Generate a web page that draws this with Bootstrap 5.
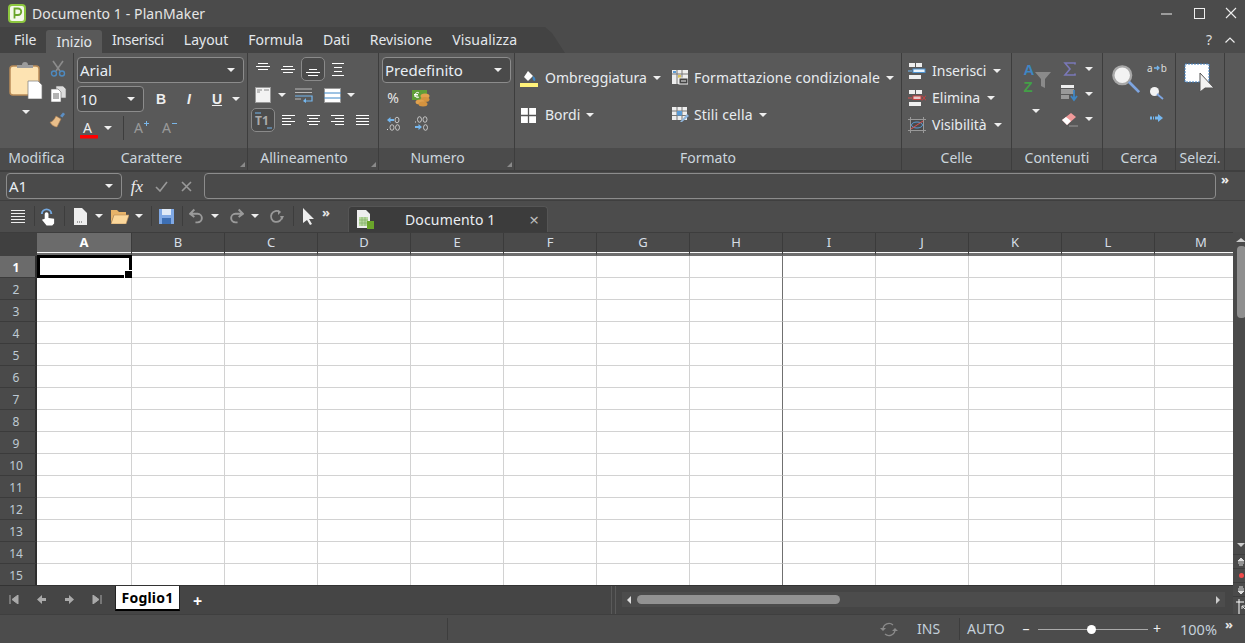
<!DOCTYPE html>
<html lang="it">
<head>
  <meta charset="UTF-8">
  <title>Documento 1 - PlanMaker</title>
  <link href="https://cdn.jsdelivr.net/npm/bootstrap@5.3.0/dist/css/bootstrap.min.css" rel="stylesheet">
  <style>
    html, body { height: 100%; overflow: hidden; }
    body { background: #4c4c4c; color: #e6e6e6; font-family: "Noto Sans", sans-serif; font-size: 14px; line-height: 1; }
    svg { display: block; flex: none; }
    text { font-family: "Noto Sans", sans-serif; }
    .tri { width: 0; height: 0; border-left: 4px solid transparent; border-right: 4px solid transparent; border-top: 4px solid #eee; flex: none; }

    .titlebar { height: 27px; background: #4b4b4b; }
    .app-logo { margin: 0 5px 0 8px; }
    .title-txt { letter-spacing: .1px; }
    .win-btns { gap: 14px; padding-right: 5px; }
    .tabrow { height: 26px; background: #4b4b4b; position: relative; }
    .tabstrip { width: 565px; height: 26px; background: #434343; clip-path: polygon(0 0, 545px 0, 552px 6px, 565px 26px, 0 26px); padding-left: 4px; }
    .rtab { padding: 0 10px; height: 26px; display: flex; align-items: center; color: #e4e8ec; }
    .rtab.on { background: #595959; border-radius: 3px 3px 0 0; margin-top: 3px; height: 23px; }
    .rtab.tight { letter-spacing: -.3px; }
    .rtab.wide { letter-spacing: .15px; }
    .tabright { gap: 12px; padding-right: 9px; color: #ddd; }

    .ribbon { height: 119px; background: #595959; border-bottom: 2px solid #3f3f3f; }
    .rgrp { display: flex; flex-direction: column; border-right: 1px solid #3d3d3d; flex: none; position: relative; }
    .rbody { height: 95px; padding-top: 4px; }
    .rlabel { height: 22px; background: #4b4b4b; color: #ccd6de; display: flex; align-items: center; justify-content: center; padding-bottom: 2px; }
    .rlabel.lnch { padding-right: 18px; }
    .launch { position: absolute; right: 2px; bottom: 3px; width: 0; height: 0; border-left: 5px solid transparent; border-bottom: 5px solid #8a8a8a; }
    .g-mod { width: 74px; } .g-car { width: 174px; } .g-ali { width: 131px; } .g-num { width: 136px; }
    .g-for { width: 387px; } .g-cel { width: 110px; } .g-con { width: 91px; } .g-cer { width: 73px; } .g-sel { width: 49px; }
    .g-rest { flex: 1; }

    .slots { display: grid; justify-items: center; align-items: center; }
    .combo { border: 1px solid #8c8c8c; border-radius: 4px; background: #4a4a4a; height: 26px; display: flex; align-items: center; justify-content: space-between; padding: 0 8px 0 2px; font-size: 15px; color: #e8eef4; }
    .press { border: 1px solid #8a8a8a; border-radius: 5px; background: #4b4b4b; width: 24px; height: 24px; display: flex; align-items: center; justify-content: center; }

    .mod-wrap { display: flex; padding-left: 8px; padding-top: 7px; }
    .mod-left { width: 36px; display: flex; flex-direction: column; align-items: center; gap: 11px; }
    .mod-right { width: 24px; margin-left: 2px; display: flex; flex-direction: column; align-items: center; gap: 8px; }

    .car-wrap { padding-left: 3px; }
    .c-font { width: 167px; }
    .c-size { width: 67px; }
    .car-r2 { margin-top: 3px; display: flex; align-items: center; }
    .car-bt { display: grid; grid-template-columns: 28px 28px 28px 10px; justify-items: center; align-items: center; margin-left: 3px; }
    .car-bt b, .car-bt i, .car-bt u { font-family: "Liberation Sans", sans-serif; font-size: 14px; font-weight: 700; color: #eee; }
    .car-r3 { grid-template-columns: 24px 14px 16px 22px 34px; margin-top: 3px; height: 26px; }
    .vsep { width: 1px; height: 24px; background: #3d3d3d; }
    .growa { display: flex; align-items: flex-start; color: #999; font-size: 14px; line-height: 16px; }

    .ali-wrap { padding-left: 2px; }
    .ali-r1 { grid-template-columns: repeat(4, 25px); height: 24px; }
    .ali-r2 { grid-template-columns: 26px 12px 32px 24px 14px; height: 24px; margin-top: 2px; }
    .ali-r3 { grid-template-columns: 26px 25px 24px 25px 24px; height: 24px; margin-top: 1px; }

    .num-wrap { padding-left: 3px; }
    .c-num { width: 129px; }
    .num-r { grid-template-columns: 22px 34px; margin-top: 3px; height: 24px; }
    .num-r + .num-r { margin-top: 1px; }

    .for-wrap { display: grid; grid-template-columns: 157px 228px; padding-top: 7px; row-gap: 1px; align-content: start; }
    .for-item { display: flex; align-items: center; height: 36px; color: #e8ecf0; }
    .for-ic { width: 30px; padding-left: 5px; flex: none; }
    .for-ic.brd { padding-left: 6px; }
    .for-ic2 { width: 22px; flex: none; }
    .for-item .tri { margin-left: 6px; }
    .for-wide { letter-spacing: .16px; }

    .cel-wrap { padding: 7px 0 0 6px; display: flex; flex-direction: column; gap: 6px; }
    .cel-item { display: flex; align-items: center; height: 21px; color: #e8ecf0; }
    .cel-item span { margin-left: 6px; margin-right: 7px; }

    .con-wrap { display: flex; padding-top: 3px; }
    .con-left { width: 48px; display: flex; flex-direction: column; align-items: center; gap: 14px; padding-top: 5px; }
    .az { display: flex; padding-left: 3px; }
    .azl { font-family: "Liberation Sans", sans-serif; font-weight: 700; font-size: 15px; line-height: 17px; height: 17px; }
    .azl.a1 { color: #3e86c4; }
    .azl.z1 { color: #43a047; }
    .az-funnel { margin-top: 11px; margin-left: 1px; }
    .con-right { display: grid; grid-template-columns: 20px 18px; justify-items: center; align-items: center; grid-auto-rows: 25px; }

    .cer-wrap { display: flex; padding: 6px 0 0 8px; }
    .mag-big { margin-top: 5px; }
    .cer-right { margin-left: 6px; display: flex; flex-direction: column; align-items: center; padding-top: 3px; }
    .cer-right .ab { font-size: 10px; line-height: 12px; height: 12px; display: flex; align-items: center; gap: 1px; color: #ddd; }
    .mag-sm { margin-top: 12px; }
    .arr-sm { margin-top: 13px; }

    .sel-wrap { padding: 10px 0 0 8px; }

    .formbar { height: 28px; padding-left: 6px; }
    .c-name { width: 116px; height: 26px; }
    .fxbtns { display: grid; grid-template-columns: 30px 18px 32px; justify-items: center; align-items: center; margin-right: 2px; }
    .fx { font-family: "Liberation Serif", serif; font-style: italic; font-size: 17px; color: #eee; }
    .finput { flex: 1; height: 26px; border: 1px solid #8c8c8c; border-radius: 4px; background: #4a4a4a; }
    .more { color: #eee; font-size: 13px; width: 18px; text-align: center; height: 26px; margin-right: 11px; font-weight: 700; }

    .toolbar { height: 32px; border-top: 1px solid #3f3f3f; padding-left: 8px; }
    .tb-slots { display: grid; height: 30px; justify-items: center; align-items: center;
      grid-template-columns: 20px 12px 16px 16px 16px 22px 20px 18px 6px 24px 8px 20px 18px 24px 14px 30px 2px 28px 8px; }
    .tsep { width: 1px; height: 20px; background: #3d3d3d; flex: none; }
    .tb-more { font-weight: 700; font-size: 13px; margin-top: -8px; }
    .doctab { width: 200px; height: 26px; margin: 5px 0 0 18px; background: #3c3c3c; border: 1px solid #555; border-bottom: 0; border-radius: 4px 4px 0 0; display: flex; align-items: center; padding: 0 8px 0 7px; color: #eaeef2; }
    .doctab span { margin-left: 31px; flex: 1; letter-spacing: .15px; }
    .doctab em { font-style: normal; color: #bbb; font-size: 17px; }

    .workarea { height: 382px; display: flex; }
    .workleft { width: 1233px; flex: none; }
    .sheet { height: 353px; display: grid; grid-template-columns: 37px 95px repeat(12, 93px); grid-template-rows: 23px 22px repeat(14, 22px); overflow: hidden; position: relative; border-top: 1px solid #3d3d3d; background: #4a4a4a; }
    .ch { background: #4a4a4a; border-right: 1px solid #3b3b3b; border-bottom: 3px solid #6e6e6e; box-shadow: inset 0 -1px 0 #f8f8f8; display: flex; align-items: center; justify-content: center; color: #d6dee6; font-size: 13px; padding-bottom: 2px; }
    .ch.corner { background: #404040; border-bottom: 0; border-right: 0; box-shadow: none; }
    .ch.on { background: #6b6b6b; color: #fff; font-weight: 700; }
    .rh { background: #4a4a4a; border-bottom: 1px solid #3b3b3b; border-right: 2px solid #2e2e2e; display: flex; align-items: center; justify-content: center; color: #bfcad4; font-size: 12px; padding: 2px 3px 0 0; }
    .rh.on { background: #6b6b6b; color: #fff; font-weight: 700; }
    .cl { background: #fff; border-right: 1px solid #d2d2d2; border-bottom: 1px solid #d2d2d2; }
    .cl.brk { border-right-color: #707070; }
    .selbox { position: absolute; left: 37px; top: 22px; width: 95px; height: 23px; border: 3px solid #000; }
    .selbox::after { content: ""; position: absolute; right: -3px; bottom: -3px; width: 8px; height: 8px; background: #000; border-left: 1px solid #fff; border-top: 1px solid #fff; }

    .vscroll { flex: 1; display: flex; flex-direction: column; align-items: center; background: #4a4a4a; padding-top: 6px; }
    .vthumb { width: 9px; height: 72px; background: #8f8f8f; border-radius: 4px; margin-top: 4px; }
    .vspace { flex: 1; }
    .tri-w { border-top-color: #ccc; margin-bottom: 7px; }
    .tri-up { width: 0; height: 0; border-left: 5px solid transparent; border-right: 5px solid transparent; border-bottom: 4px solid #ccc; }
    .vbtn { height: 14px; width: 100%; display: flex; align-items: center; justify-content: center; border-top: 1px solid #3d3d3d; }
    .vbtn.last { border-bottom: 1px solid #3d3d3d; height: 15px; }
    .dot { width: 5px; height: 5px; border-radius: 50%; background: #f04b4b; }
    .sizer { margin: 2px 0 0 3px; }

    .sheetbar { height: 29px; background: #454545; border-top: 1px solid #333; }
    .navs { display: grid; grid-template-columns: 28px 27px 28px 28px; justify-items: center; width: 115px; padding-top: 9px; }
    .stab { width: 65px; height: 25px; background: #fff; color: #000; font-weight: 700; border-bottom: 2px solid #000; border-left: 1px solid #222; border-right: 1px solid #222; display: flex; align-items: center; justify-content: center; font-size: 14px; letter-spacing: .2px; }
    .plus { margin: 7px 0 0 13px; color: #fff; font-weight: 700; font-size: 16px; }
    .splitter { margin: 0 6px 0 auto; width: 5px; height: 28px; border-left: 1px solid #5a5a5a; border-right: 1px solid #5a5a5a; }
    .hzone { width: 603px; height: 15px; background: #4c4c4c; margin: 6px 8px 0 0; display: flex; align-items: center; padding: 0 5px; }
    .hthumb { width: 203px; height: 9px; background: #929292; border-radius: 5px; margin-left: 6px; }
    .lt { width: 0; height: 0; border-top: 4px solid transparent; border-bottom: 4px solid transparent; border-right: 4px solid #ddd; }
    .rt { width: 0; height: 0; border-top: 4px solid transparent; border-bottom: 4px solid transparent; border-left: 4px solid #ccc; margin-left: auto; }

    .statusbar { height: 29px; background: #4c4c4c; border-top: 1px solid #3f3f3f; }
    .statusbar > * { flex: none; }
    .stsep { width: 1px; height: 22px; background: #3d3d3d; }
    .st1 { margin-left: 447px; }
    .sync { margin-left: 432px; }
    .ins { margin-left: 19px; width: 32px; color: #c4d0da; }
    .st2 { margin: 0 7px 0 10px; }
    .autot { width: 39px; color: #c4d0da; white-space: nowrap; }
    .zoomz { display: grid; grid-template-columns: 24px 110px 18px; align-items: center; justify-items: center; margin-left: 8px; color: #eee; }
    .ztrack { width: 110px; height: 1px; background: #aaa; position: relative; }
    .zknob { position: absolute; left: 49px; top: -4px; width: 9px; height: 9px; border-radius: 50%; background: #fff; }
    .pct { margin-left: 14px; width: 36px; color: #c4d0da; font-size: 14.5px; }
    .st-more { font-weight: 700; font-size: 13px; margin: -10px 0 0 9px; }
  </style>
</head>
<body>
  <div class="titlebar d-flex align-items-center">
    <svg class="app-logo" width="19" height="19" viewBox="0 0 19 19"><rect x="1" y="1" width="16" height="17" rx="3" fill="#f4f8ea" stroke="#8cc63f" stroke-width="2"/><path d="M6.500 14.500v-10h3.500a3 3 0 010 6.500H6.500" fill="none" stroke="#6aa52a" stroke-width="1.800"/></svg>
    <span class="title-txt">Documento 1 - PlanMaker</span>
    <div class="win-btns d-flex align-items-center ms-auto">
      <svg width="18" height="18" viewBox="0 0 18 18"><path d="M3 9h11" stroke="#eee"/></svg>
      <svg width="18" height="18" viewBox="0 0 18 18"><rect x="4.500" y="3.500" width="10" height="10" fill="none" stroke="#eee"/></svg>
      <svg width="18" height="18" viewBox="0 0 18 18"><path d="M4 3l10 10M14 3L4 13" stroke="#eee" stroke-width="1.100"/></svg>
    </div>
  </div>
  <div class="tabrow d-flex align-items-center justify-content-between">
    <div class="tabstrip d-flex">
      <div class="rtab">File</div>
      <div class="rtab on">Inizio</div>
      <div class="rtab tight">Inserisci</div>
      <div class="rtab">Layout</div>
      <div class="rtab">Formula</div>
      <div class="rtab">Dati</div>
      <div class="rtab">Revisione</div>
      <div class="rtab wide">Visualizza</div>
    </div>
    <div class="tabright d-flex align-items-center">
      <span>?</span>
      <svg width="12" height="8" viewBox="0 0 12 8"><path d="M1.500 6.500L6 2l4.500 4.500" fill="none" stroke="#eee" stroke-width="1.200"/></svg>
    </div>
  </div>

  <div class="ribbon d-flex">
    <!-- Modifica -->
    <div class="rgrp g-mod">
      <div class="rbody mod-wrap">
        <div class="mod-left">
          <svg width="34" height="39" viewBox="0 0 34 39"><rect x="1" y="6" width="29" height="29" rx="3" fill="#fde3b2" stroke="#b98c58" stroke-width="1.500"/><path d="M8 8V5h5a3 3 0 016 0h5v3z" fill="#9c9c9c"/><path d="M19 21h10l4 4v14H19z" fill="#fff" stroke="#777" stroke-width=".7"/></svg>
          <div class="tri"></div>
        </div>
        <div class="mod-right">
          <svg width="16" height="17" viewBox="0 0 16 17"><path d="M3 1l7 10M13 1L6 11" stroke="#8c8c8c" stroke-width="1.600"/><circle cx="4" cy="13.500" r="2.500" fill="none" stroke="#4d8ac0" stroke-width="1.400"/><circle cx="12" cy="13.500" r="2.500" fill="none" stroke="#4d8ac0" stroke-width="1.400"/></svg>
          <svg width="17" height="17" viewBox="0 0 17 17"><path d="M6 1h7l3 3v9H6z" fill="#ddd" stroke="#666" stroke-width=".6"/><path d="M1 4h7l3 3v10H1z" fill="#fff" stroke="#666" stroke-width=".6"/><path d="M3 9h6M3 11h6M3 13h6" stroke="#666"/></svg>
          <svg width="18" height="18" viewBox="0 0 18 18"><path d="M11 6l3-3.500 2 1.500-2.500 3.500z" fill="#5c8fc4"/><path d="M7 6l5 3-4 8c-2 0-6-2-7-5 2 0 4-2 6-6z" fill="#e9be8a" stroke="#a5794d" stroke-width=".6"/></svg>
        </div>
      </div>
      <div class="rlabel">Modifica</div>
    </div>
    <!-- Carattere -->
    <div class="rgrp g-car">
      <div class="rbody car-wrap">
        <div class="combo c-font"><span>Arial</span><div class="tri"></div></div>
        <div class="car-r2">
          <div class="combo c-size"><span>10</span><div class="tri"></div></div>
          <div class="car-bt"><b>B</b><i>I</i><u>U</u><div class="tri"></div></div>
        </div>
        <div class="slots car-r3">
          <svg width="20" height="24" viewBox="0 0 20 24"><text x="4" y="17" font-size="14" fill="#eee">A</text><rect x="1" y="19" width="18" height="3.500" fill="#f00"/></svg>
          <div class="tri"></div>
          <div class="vsep"></div>
          <div class="growa"><span>A</span><svg width="7" height="7" viewBox="0 0 7 7"><path d="M1 3.500h5M3.500 1v5" stroke="#7ab6e8"/></svg></div>
          <div class="growa"><span>A</span><svg width="7" height="7" viewBox="0 0 7 7"><path d="M1 3.500h5" stroke="#7ab6e8"/></svg></div>
        </div>
      </div>
      <div class="rlabel lnch">Carattere</div>
      <div class="launch"></div>
    </div>
    <!-- Allineamento -->
    <div class="rgrp g-ali">
      <div class="rbody ali-wrap">
        <div class="slots ali-r1">
          <svg width="14" height="20" viewBox="0 0 14 20"><path d="M2 4.500h10M0 7.500h14M2 10.500h10" stroke="#fff" stroke-width="1.100"/></svg>
          <svg width="14" height="12" viewBox="0 0 14 12"><path d="M2 3.500h10M0 6.500h14M2 9.500h10" stroke="#fff" stroke-width="1.100"/></svg>
          <div class="press"><svg width="14" height="20" viewBox="0 0 14 20"><path d="M3 10.500h8M0 13.500h14M2 16.500h10" stroke="#fff" stroke-width="1.100"/></svg></div>
          <svg width="14" height="16" viewBox="0 0 14 16"><path d="M1 2.500h12M3 6.500h8M3 10.500h8M1 14.500h12" stroke="#fff" stroke-width="1.100"/></svg>
        </div>
        <div class="slots ali-r2">
          <svg width="16" height="16" viewBox="0 0 16 16"><rect x=".5" y=".5" width="15" height="15" fill="#f2f2f2" stroke="#999"/><path d="M2 3h5M9 3h5M2 5h3" stroke="#888"/></svg>
          <div class="tri"></div>
          <svg width="18" height="15" viewBox="0 0 18 15"><path d="M0 1h17M0 4.500h17M0 11h6" stroke="#bbb"/><path d="M0 8h17v5H9" fill="none" stroke="#75b7ef" stroke-width="1.200"/><path d="M11 10l-3 3 3 2" fill="#75b7ef"/></svg>
          <svg width="17" height="15" viewBox="0 0 17 15"><rect x=".5" y=".5" width="16" height="14" fill="#fff" stroke="#999"/><path d="M0 5h17M0 10h17" stroke="#3d86c6"/></svg>
          <div class="tri"></div>
        </div>
        <div class="slots ali-r3">
          <div class="press"><svg width="20" height="20" viewBox="0 0 20 20"><text x="2" y="15" font-size="12" font-weight="700" fill="#aaa">T1</text><path d="M2 3h6M14 18h5" stroke="#75b7ef"/></svg></div>
          <svg width="13" height="12" viewBox="0 0 13 12"><path d="M0 1.500h13M0 4.500h9M0 7.500h13M0 10.500h9" stroke="#fff" stroke-width="1.100"/></svg>
          <svg width="13" height="12" viewBox="0 0 13 12"><path d="M0 1.500h13M2 4.500h9M0 7.500h13M2 10.500h9" stroke="#fff" stroke-width="1.100"/></svg>
          <svg width="13" height="12" viewBox="0 0 13 12"><path d="M0 1.500h13M4 4.500h9M0 7.500h13M4 10.500h9" stroke="#fff" stroke-width="1.100"/></svg>
          <svg width="13" height="12" viewBox="0 0 13 12"><path d="M0 1.500h13M0 4.500h13M0 7.500h13M0 10.500h13" stroke="#fff" stroke-width="1.100"/></svg>
        </div>
      </div>
      <div class="rlabel lnch">Allineamento</div>
      <div class="launch"></div>
    </div>
    <!-- Numero -->
    <div class="rgrp g-num">
      <div class="rbody num-wrap">
        <div class="combo c-num"><span>Predefinito</span><div class="tri"></div></div>
        <div class="slots num-r">
          <span>%</span>
          <svg width="18" height="17" viewBox="0 0 18 17"><rect x="0" y="0" width="15" height="10" fill="#5f9e38"/><path d="M7 3a2.500 2.500 0 100 4M2 4.500h4M2 6h4" fill="none" stroke="#fff"/><ellipse cx="13" cy="6" rx="4.500" ry="2.500" fill="#e0a14e"/><ellipse cx="13" cy="9.500" rx="4.500" ry="2.500" fill="#d4933f"/><ellipse cx="8" cy="12" rx="4.500" ry="2.500" fill="#e0a14e"/><ellipse cx="11" cy="14" rx="4.500" ry="2.500" fill="#d4933f"/></svg>
        </div>
        <div class="slots num-r">
          <svg width="15" height="15" viewBox="0 0 15 15"><path d="M1 4l3.500-3v2H8v2H4.500v2z" fill="#75b7ef"/><ellipse cx="11" cy="4" rx="2" ry="2.800" fill="none" stroke="#ddd" stroke-width=".8"/><path d="M1 13.500h1" stroke="#ddd"/><ellipse cx="6" cy="11.500" rx="2" ry="2.800" fill="none" stroke="#ddd" stroke-width=".8"/><ellipse cx="11.500" cy="11.500" rx="2" ry="2.800" fill="none" stroke="#ddd" stroke-width=".8"/></svg>
          <svg width="15" height="15" viewBox="0 0 15 15"><path d="M1 6h1" stroke="#ddd"/><ellipse cx="5.500" cy="3.500" rx="2" ry="2.800" fill="none" stroke="#ddd" stroke-width=".8"/><ellipse cx="11" cy="3.500" rx="2" ry="2.800" fill="none" stroke="#ddd" stroke-width=".8"/><path d="M8 11L4.500 8v2H1v2h3.500v2z" fill="#75b7ef"/><ellipse cx="11.500" cy="11.500" rx="2" ry="2.800" fill="none" stroke="#ddd" stroke-width=".8"/></svg>
        </div>
      </div>
      <div class="rlabel lnch">Numero</div>
      <div class="launch"></div>
    </div>
    <!-- Formato -->
    <div class="rgrp g-for">
      <div class="rbody for-wrap">
        <div class="for-item"><div class="for-ic"><svg width="18" height="17" viewBox="0 0 18 17"><path d="M8 1l5 5-5 5-4-4z" fill="#fff"/><path d="M13 6c2 1 3 3 2 5-2 0-3-2-2-5z" fill="#3e86c4"/><rect x="0" y="13" width="18" height="4" fill="#fff27a"/></svg></div><span>Ombreggiatura</span><div class="tri"></div></div>
        <div class="for-item"><div class="for-ic2"><svg width="16" height="16" viewBox="0 0 16 16"><rect x="0" y="0" width="16" height="14" fill="#eee"/><path d="M0 4h16M5 0v14M10 0v14" stroke="#777"/><rect x="1" y="1" width="3" height="2" fill="#5b9bd5"/><rect x="6" y="5" width="3" height="3" fill="#d9c25b"/><rect x="7" y="8" width="9" height="6" fill="#444" stroke="#eee"/><path d="M9 11h5" stroke="#eee"/></svg></div><span class="for-wide">Formattazione condizionale</span><div class="tri"></div></div>
        <div class="for-item"><div class="for-ic brd"><svg width="15" height="15" viewBox="0 0 15 15"><rect width="15" height="15" fill="#fff"/><path d="M7.500 0v15M0 7.500h15" stroke="#555" stroke-width="1.300"/></svg></div><span>Bordi</span><div class="tri"></div></div>
        <div class="for-item"><div class="for-ic2"><svg width="17" height="16" viewBox="0 0 17 16"><rect x="0" y="0" width="15" height="13" fill="#eee"/><path d="M0 4h15M5 0v13M10 0v13M0 8.500h15" stroke="#777"/><rect x="5" y="4" width="5" height="4.500" fill="#5b9bd5"/><path d="M8 15l7-8 2 2-7 6z" fill="#8fb6dd"/></svg></div><span class="for-wide">Stili cella</span><div class="tri"></div></div>
      </div>
      <div class="rlabel">Formato</div>
    </div>
    <!-- Celle -->
    <div class="rgrp g-cel">
      <div class="rbody cel-wrap">
        <div class="cel-item"><svg width="18" height="18" viewBox="0 0 18 18"><path d="M1 1h6v4H1zM8 1h6v4H8zM1 13h12v4H1z" fill="#eee"/><rect x="5" y="7" width="12" height="3.500" fill="#e8f2fb" stroke="#4d92cf"/><path d="M0 9h4" stroke="#75b7ef"/></svg><span>Inserisci</span><div class="tri"></div></div>
        <div class="cel-item"><svg width="18" height="18" viewBox="0 0 18 18"><path d="M1 1h6v4H1zM8 1h6v4H8zM1 13h12v4H1z" fill="#eee"/><rect x="5" y="7" width="8" height="3.500" fill="#e8c6c6" stroke="#c84040"/><path d="M0 9h4" stroke="#e05050"/><path d="M14 6.500l4 5M18 6.500l-4 5" stroke="#c84040"/></svg><span>Elimina</span><div class="tri"></div></div>
        <div class="cel-item"><svg width="18" height="16" viewBox="0 0 18 16"><rect x="2.500" y="2.500" width="13" height="11" fill="#4b4b4b" stroke="#bbb"/><path d="M0 2.500h18M0 13.500h18M2.500 0v16M15.500 0v16" stroke="#999"/><ellipse cx="9" cy="8" rx="5.500" ry="3" fill="none" stroke="#5b9bd5"/><path d="M3 12L15 4" stroke="#e05050"/></svg><span>Visibilità</span><div class="tri"></div></div>
      </div>
      <div class="rlabel">Celle</div>
    </div>
    <!-- Contenuti -->
    <div class="rgrp g-con">
      <div class="rbody con-wrap">
        <div class="con-left">
          <div class="az">
            <div><div class="azl a1">A</div><div class="azl z1">Z</div></div>
            <svg class="az-funnel" width="16" height="16" viewBox="0 0 16 16"><path d="M0 0h16l-6 7v9l-4-2V7z" fill="#8a8a8a"/></svg>
          </div>
          <div class="tri"></div>
        </div>
        <div class="con-right">
          <svg width="14" height="14" viewBox="0 0 14 14"><path d="M12 2.500V1H2l5 6-5 6h10v-1.500" fill="none" stroke="#7a78b8" stroke-width="1.600"/></svg>
          <div class="tri"></div>
          <svg width="18" height="17" viewBox="0 0 18 17"><rect x="0" y="0" width="13" height="3" fill="#eee"/><rect x="0" y="4" width="13" height="5" fill="#999"/><rect x="0" y="10" width="8" height="4" fill="#999"/><path d="M13 5v9M10 11l3 4 3-4" fill="none" stroke="#3e86c4" stroke-width="1.800"/></svg>
          <div class="tri"></div>
          <svg width="18" height="16" viewBox="0 0 18 16"><path d="M1 9l9-7 5 4-9 8z" fill="#f19a9a"/><path d="M1 9l4-3 5 4-4 4z" fill="#fff"/><path d="M8 15h9" stroke="#999"/></svg>
          <div class="tri"></div>
        </div>
      </div>
      <div class="rlabel">Contenuti</div>
    </div>
    <!-- Cerca -->
    <div class="rgrp g-cer">
      <div class="rbody cer-wrap">
        <svg class="mag-big" width="30" height="30" viewBox="0 0 32 32"><circle cx="12" cy="12" r="9.500" fill="#f2f2f2" stroke="#a8a8a8" stroke-width="2.500"/><path d="M19 19l11 11" stroke="#7ea5e0" stroke-width="3"/></svg>
        <div class="cer-right">
          <div class="ab"><span>a</span><svg width="6" height="6" viewBox="0 0 6 6"><path d="M0 3h4M3 1l2 2-2 2" fill="none" stroke="#75b7ef" stroke-width="1.300"/></svg><span>b</span></div>
          <svg class="mag-sm" width="15" height="14" viewBox="0 0 15 14"><circle cx="5.500" cy="5.500" r="4.500" fill="#f2f2f2"/><path d="M8 8l6 5" stroke="#7ea5e0" stroke-width="1.800"/></svg>
          <svg class="arr-sm" width="14" height="10" viewBox="0 0 14 10"><path d="M0 5h2M3 5h1M5 5h4" stroke="#75b7ef" stroke-width="3"/><path d="M8 1l5 4-5 4z" fill="#75b7ef"/></svg>
        </div>
      </div>
      <div class="rlabel">Cerca</div>
    </div>
    <!-- Selezi. -->
    <div class="rgrp g-sel">
      <div class="rbody sel-wrap">
        <svg width="32" height="30" viewBox="0 0 32 30"><rect x="1" y="1" width="24" height="18" fill="#fff" stroke="#3e7fc0" stroke-dasharray="2 1"/><path d="M16 10v19l5-4h9z" fill="#f2f2f2" stroke="#555"/></svg>
      </div>
      <div class="rlabel">Selezi.</div>
    </div>
    <div class="g-rest d-flex flex-column">
      <div class="rbody"></div>
      <div class="rlabel"></div>
    </div>
  </div>

  <div class="formbar d-flex align-items-center">
    <div class="combo c-name"><span>A1</span><div class="tri"></div></div>
    <div class="fxbtns">
      <span class="fx">fx</span>
      <svg width="13" height="11" viewBox="0 0 13 11"><path d="M1 6l4 4 7-9" fill="none" stroke="#999" stroke-width="1.600"/></svg>
      <svg width="11" height="11" viewBox="0 0 11 11"><path d="M1 1l9 9M10 1l-9 9" stroke="#999" stroke-width="1.600"/></svg>
    </div>
    <div class="finput"></div>
    <div class="more">»</div>
  </div>

  <div class="toolbar d-flex">
    <div class="tb-slots">
      <svg width="16" height="14" viewBox="0 0 16 14"><path d="M1 1.500h14M1 4.500h14M1 7.500h14M1 10.500h14M1 13.500h14" stroke="#eee" stroke-width="1.100"/></svg>
      <div class="tsep"></div>
      <svg width="16" height="20" viewBox="0 0 17 20"><path d="M2 8a5 5 0 0110 0" fill="none" stroke="#75a9e0" stroke-width="2"/><path d="M5 8a2 2 0 014 0v4l6 1v5l-2 2H7l-5-6 3-1z" fill="#fff"/></svg>
      <div class="tsep"></div>
      <svg width="13" height="17" viewBox="0 0 13 17"><path d="M0 0h8l5 5v12H0z" fill="#eee"/><path d="M3 14h1M5 14h1M7 14h1" stroke="#555"/></svg>
      <div class="tri"></div>
      <svg width="18" height="15" viewBox="0 0 18 15"><path d="M0 1h6l2 2h7v3H3L0 14z" fill="#e7b369"/><path d="M3 6h15l-3 9H0z" fill="#fbd79b" stroke="#b98c58" stroke-width=".6"/></svg>
      <div class="tri"></div>
      <div class="tsep"></div>
      <svg width="15" height="15" viewBox="0 0 15 15"><path d="M0 0h15v15H0z" fill="#7fa8e4"/><rect x="3" y="0" width="9" height="6" fill="#dfe9f6"/><rect x="3" y="9" width="9" height="6" fill="#3d6fb4"/></svg>
      <div class="tsep"></div>
      <svg width="15" height="17" viewBox="0 0 14 15"><path d="M5 1L1 5l4 3M1 5h7a4 4 0 010 8H6" fill="none" stroke="#9a9a9a" stroke-width="1.800"/></svg>
      <div class="tri"></div>
      <svg width="15" height="17" viewBox="0 0 14 15"><path d="M9 1l4 4-4 3M13 5H6a4 4 0 000 8h2" fill="none" stroke="#9a9a9a" stroke-width="1.800"/></svg>
      <div class="tri"></div>
      <svg width="16" height="15" viewBox="0 0 16 15"><path d="M13 7.500a5.500 5.500 0 11-2-4.300" fill="none" stroke="#999" stroke-width="1.800"/><path d="M15 7l-4 0 2 4z" fill="#999"/><path d="M9 1l3 2-3 3z" fill="#999"/></svg>
      <div class="tsep"></div>
      <svg width="13" height="17" viewBox="0 0 13 17"><path d="M1 0v15l4-3 3 5 2-1-3-5h5z" fill="#eee"/></svg>
      <span class="tb-more">»</span>
    </div>
    <div class="doctab">
      <svg width="18" height="19" viewBox="0 0 18 19"><path d="M1 0h9l4 4v14H1z" fill="#eee"/><path d="M3 7h9v9H3z" fill="#b8d8a0"/><path d="M3 10h9M3 13h9M6 7v9M9 7v9" stroke="#7aa860" stroke-width=".6"/><rect x="11" y="11" width="7" height="8" fill="#6aa52a"/></svg>
      <span>Documento 1</span>
      <em>×</em>
    </div>
  </div>

  <div class="workarea">
    <div class="workleft">
      <div class="sheet" id="sheet"></div>
      <div class="sheetbar d-flex align-items-start">
        <div class="navs">
          <svg width="10" height="9" viewBox="0 0 10 9"><path d="M1 0v9M9 0v9L3 4.500z" stroke="#aaa" fill="#aaa"/></svg>
          <svg width="9" height="9" viewBox="0 0 9 9"><path d="M5 0L0 4.500 5 9V6h4V3H5z" fill="#aaa"/></svg>
          <svg width="9" height="9" viewBox="0 0 9 9"><path d="M4 0l5 4.500L4 9V6H0V3h4z" fill="#aaa"/></svg>
          <svg width="10" height="9" viewBox="0 0 10 9"><path d="M9 0v9M1 0v9l6-4.500z" stroke="#aaa" fill="#aaa"/></svg>
        </div>
        <div class="stab">Foglio1</div>
        <span class="plus">+</span>
        <div class="splitter"></div>
        <div class="hzone">
          <div class="lt"></div>
          <div class="hthumb"></div>
          <div class="rt"></div>
        </div>
      </div>
    </div>
    <div class="vscroll">
      <div class="tri-up"></div>
      <div class="vthumb"></div>
      <div class="vspace"></div>
      <div class="tri tri-w"></div>
      <div class="vbtn"><svg width="8" height="8" viewBox="0 0 8 8"><path d="M4 0L1 3h6zM1 5h6M2 7h4" fill="#ddd" stroke="#ddd"/></svg></div>
      <div class="vbtn"><div class="dot"></div></div>
      <div class="vbtn last"><svg width="8" height="8" viewBox="0 0 8 8"><path d="M4 8L1 5h6zM1 3h6M2 1h4" fill="#ddd" stroke="#ddd"/></svg></div>
      <svg class="sizer" width="13" height="15" viewBox="0 0 13 15"><path d="M0 3h8M3 0v15" stroke="#fff"/><path d="M6 7l5 5M6 7h3M6 7v3" stroke="#ddd"/></svg>
    </div>
  </div>

  <div class="statusbar d-flex align-items-center">
    <div class="stsep st1"></div>
    <svg class="sync" width="18" height="15" viewBox="0 0 18 15"><path d="M3 7a6 6 0 0110-4M15 8a6 6 0 01-10 4" fill="none" stroke="#8a8a8a" stroke-width="1.300"/><path d="M0 6h6L3 9zM12 9h6l-3-3z" fill="#8a8a8a"/></svg>
    <span class="ins">INS</span>
    <div class="stsep st2"></div>
    <span class="autot">AUTO</span>
    <div class="zoomz">
      <span>–</span>
      <div class="ztrack"><div class="zknob"></div></div>
      <span>+</span>
    </div>
    <span class="pct">100%</span>
    <span class="st-more">»</span>
  </div>

  <script>
    // griglia del foglio
    const sheet = document.getElementById('sheet');
    const cols = 'ABCDEFGHIJKLM'.split('');
    let html = '<div class="ch corner"></div>';
    cols.forEach((c, i) => {
      html += `<div class="ch${i === 0 ? ' on' : ''}">${c}</div>`;
    });
    for (let r = 1; r <= 15; r++) {
      html += `<div class="rh${r === 1 ? ' on' : ''}">${r}</div>`;
      cols.forEach(c => {
        html += `<div class="cl${c === 'H' ? ' brk' : ''}"></div>`;
      });
    }
    sheet.innerHTML = html + '<div class="selbox"></div>';
  </script>
  <script src="https://cdn.jsdelivr.net/npm/bootstrap@5.3.0/dist/js/bootstrap.bundle.min.js"></script>
</body>
</html>
